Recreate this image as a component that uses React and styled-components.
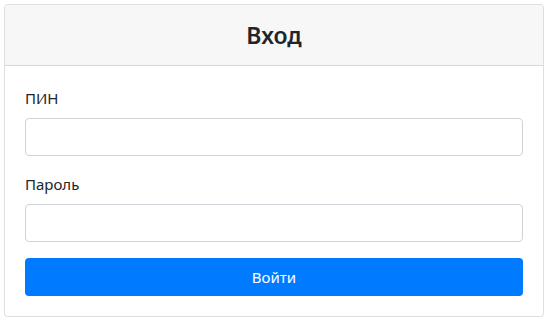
import React from "react";
import styled, { createGlobalStyle } from "styled-components";

const GlobalStyle = createGlobalStyle`
  * { box-sizing: border-box; }
  body {
    margin: 0;
    padding: 4px;
    background: #ffffff;
    font-family: "Noto Sans", "Open Sans", sans-serif;
    color: #212529;
  }
`

const Card = styled.div`
  width: 540px;
  border: 1px solid rgba(0, 0, 0, 0.125);
  border-radius: 4px;
  background: #ffffff;
  overflow: hidden;
`

const Header = styled.div`
  height: 61px;
  display: flex;
  align-items: center;
  justify-content: center;
  background: #f7f7f7;
  border-bottom: 1px solid rgba(0, 0, 0, 0.125);
`

const Title = styled.h3`
  margin: 0;
  font-size: 23px;
  font-weight: 600;
  color: #212529;
`

const Body = styled.form`
  padding: 20px;
  display: flex;
  flex-direction: column;
`

const Group = styled.div`
  display: flex;
  flex-direction: column;
  margin-bottom: 16px;
`

const Label = styled.label`
  font-size: 15px;
  line-height: 24px;
  margin-bottom: 8px;
`

const Input = styled.input`
  height: 38px;
  width: 100%;
  border: 1px solid #ced4da;
  border-radius: 4px;
  padding: 6px 12px;
  font-size: 16px;
  font-family: inherit;
  outline: none;
`

const Button = styled.button`
  height: 38px;
  width: 100%;
  border: none;
  border-radius: 4px;
  background: #007bff;
  color: #ffffff;
  font-size: 15px;
  font-family: inherit;
  cursor: pointer;
`

const App = () => {
  return (
    <>
      <GlobalStyle />
      <Card>
        <Header>
          <Title>Вход</Title>
        </Header>
        <Body onSubmit={(e) => e.preventDefault()}>
          <Group>
            <Label>ПИН</Label>
            <Input type="text" />
          </Group>
          <Group>
            <Label>Пароль</Label>
            <Input type="password" />
          </Group>
          <Button type="submit">Войти</Button>
        </Body>
      </Card>
    </>
  )
}

export default App;
